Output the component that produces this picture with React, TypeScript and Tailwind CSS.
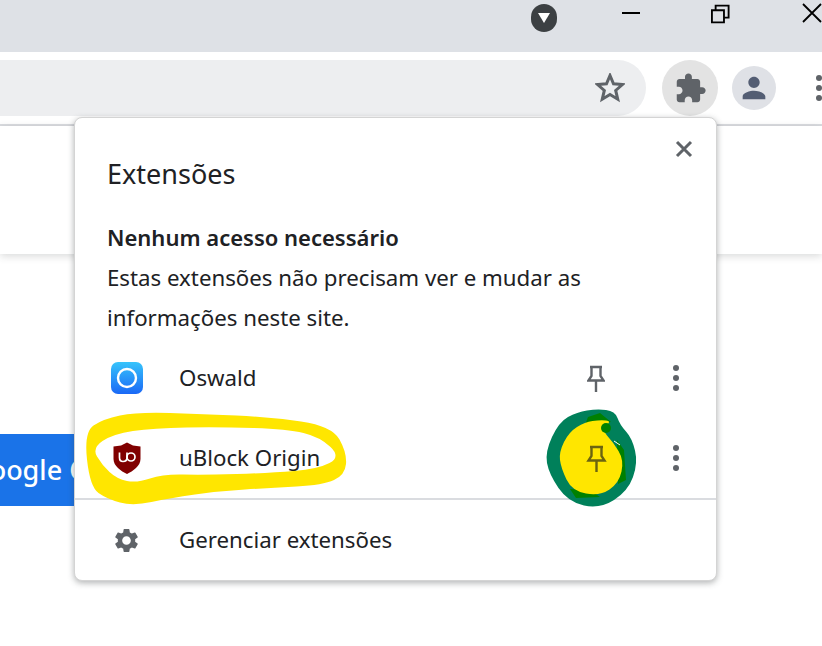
import { MdPerson, MdSettings } from "react-icons/md";

type Pt = [number, number];

// closed smooth outline through hand-traced marker points
const smooth = (pts: Pt[]) => {
  const mid = (a: Pt, b: Pt) => `${(a[0] + b[0]) / 2} ${(a[1] + b[1]) / 2}`;
  let d = `M${mid(pts[pts.length - 1], pts[0])}`;
  pts.forEach((p, i) => {
    d += `Q${p[0]} ${p[1]} ${mid(p, pts[(i + 1) % pts.length])}`;
  });
  return d + "Z";
};

const ringOuter: Pt[] = [
  [84, 432], [103, 419], [137, 412], [203, 414], [270, 417], [332, 426], [347, 453], [345, 475],
  [323, 485], [270, 488], [220, 491], [170, 498], [133, 506], [107, 499], [90, 487],
];
const ringInner: Pt[] = [
  [92, 448], [113, 434], [153, 428], [220, 427], [287, 429], [320, 437], [341, 457], [318, 469],
  [270, 473], [203, 475], [163, 474], [137, 483], [117, 479], [102, 465],
];
const greenBlob: Pt[] = [
  [597, 409], [615, 411], [620, 425], [632, 438], [638, 463], [628, 491], [600, 509], [568, 502],
  [549, 474], [545, 452], [559, 422], [577, 412],
];
const yellowBlob: Pt[] = [
  [600, 420], [612, 421], [601, 429], [613, 442], [624, 460], [619, 483], [600, 496], [572, 491],
  [561, 468], [559, 452], [569, 432], [585, 422],
];

const PinIcon = ({ color = "#5f6368" }: { color?: string }) => (
  <svg width="18" height="28" viewBox="0 0 18 28" fill="none" stroke={color} strokeWidth="2.4">
    <path d="M3 3h12M4.5 3v9L1.5 16.5h15L13.5 12V3M9 16.5V28" />
  </svg>
);

const Dots = () => (
  <div className="flex w-[6px] flex-col gap-1">
    <span className="h-[6px] w-[6px] rounded-full bg-[#5f6368]" />
    <span className="h-[6px] w-[6px] rounded-full bg-[#5f6368]" />
    <span className="h-[6px] w-[6px] rounded-full bg-[#5f6368]" />
  </div>
);

const OswaldLogo = () => (
  <svg width="32" height="32" viewBox="0 0 32 32">
    <defs>
      <linearGradient id="osw" x1="0" y1="0" x2="0" y2="1">
        <stop offset="0" stopColor="#37c4fb" />
        <stop offset="1" stopColor="#1a68f6" />
      </linearGradient>
    </defs>
    <rect width="32" height="32" rx="7" fill="url(#osw)" />
    <circle cx="16" cy="16" r="9" fill="none" stroke="#ffffff" strokeWidth="2.4" />
  </svg>
);

const UboLogo = () => (
  <svg className="ml-[2px]" width="28" height="32" viewBox="0 0 28 32">
    <path d="M14 0.5 20 3.5 27.5 4.5V17C27.5 24 20 29 14 32 8 29 0.5 24 0.5 17V4.5L8 3.5Z" fill="#800000" />
    <path d="M6.5 10.5V15.5Q6.5 19.5 10 19.5 14 19.5 14 15.5V10.5" fill="none" stroke="#ffffff" strokeWidth="1.7" />
    <circle cx="18" cy="15" r="4" fill="none" stroke="#ffffff" strokeWidth="1.7" />
  </svg>
);

const Row = ({ icon, label }: { icon: React.ReactNode; label: string }) => (
  <div className="flex h-[80px] items-center">
    <div className="flex w-[72px] pl-[4px]">{icon}</div>
    <span className="flex-1 text-[22.25px] text-[#202124]">{label}</span>
    <PinIcon />
    <div className="ml-[68px] mr-[5px]">
      <Dots />
    </div>
  </div>
);

export default function App() {
  return (
    <div className="relative h-[646px] w-[822px] overflow-hidden bg-white font-['Noto_Sans',sans-serif]">
      <header className="flex h-[52px] items-start bg-[#dee1e6] pl-[531px]">
        <div className="mt-1 flex h-7 w-7 items-center justify-center rounded-full bg-[#3c4043]">
          <svg width="14" height="12" viewBox="0 0 14 12">
            <path d="M1 1h12L7 11z" fill="#ffffff" />
          </svg>
        </div>
        <div className="ml-[65px] mt-[12px] h-[2px] w-[20px] bg-black" />
        <svg className="ml-[71px] mt-[3px]" width="20" height="21" viewBox="0 0 20 21" fill="none" stroke="#000" strokeWidth="2">
          <path d="M1 7h13v13H1zM5 7V2h14v13h-5" />
        </svg>
        <svg className="ml-[72px] mt-[3px] shrink-0" width="20" height="20" viewBox="0 0 20 20" stroke="#000" strokeWidth="1.8">
          <path d="M1 1l18 18M19 1 1 19" />
        </svg>
      </header>

      <div className="flex h-[74px] items-center border-b-2 border-[#dadce0]">
        <div className="flex h-14 w-[646px] items-center justify-end rounded-r-[28px] bg-[#edeef0] pr-[21px]">
          <svg width="30" height="30" viewBox="0 0 24 24" fill="none" stroke="#5f6368" strokeWidth="2.4">
            <path d="M22 9.24l-7.19-.62L12 2 9.19 8.63 2 9.24l5.46 4.73L5.82 21 12 17.27 18.18 21l-1.63-7.03L22 9.24z" />
          </svg>
        </div>
        <div className="ml-4 flex h-14 w-14 items-center justify-center rounded-full bg-[#e3e3e3]">
          <svg width="33" height="33" viewBox="0 0 24 24" fill="#5f6368">
            <path d="M20.5 11H19V7c0-1.1-.9-2-2-2h-4V3.5C13 2.12 11.88 1 10.5 1S8 2.12 8 3.5V5H4c-1.1 0-1.99.9-1.99 2v3.8H3.5c1.49 0 2.7 1.21 2.7 2.7s-1.21 2.7-2.7 2.7H2V20c0 1.1.9 2 2 2h3.8v-1.5c0-1.49 1.21-2.7 2.7-2.7 1.49 0 2.7 1.21 2.7 2.7V22H17c1.1 0 2-.9 2-2v-4h1.5c1.38 0 2.5-1.12 2.5-2.5S21.88 11 20.5 11z" />
          </svg>
        </div>
        <div className="ml-[14px] flex h-11 w-11 items-center justify-center rounded-full bg-[#dfe1e6]">
          <MdPerson size={34} color="#535d73" />
        </div>
        <div className="ml-[40px] shrink-0">
          <Dots />
        </div>
      </div>

      <div className="h-[128px] shadow-[0_2px_8px_rgba(60,64,67,0.2)]" />

      <div className="mt-[180px] flex h-[72px] w-[140px] items-center overflow-hidden rounded-r bg-[#1a73e8]">
        <span className="-ml-[30px] whitespace-nowrap text-[27px] font-medium text-white">Google Chrome</span>
      </div>

      <section className="absolute left-[74px] top-[117px] h-[464px] w-[643px] rounded-lg border border-[#d4d4d4] bg-white pl-[32px] shadow-[0_2px_6px_rgba(60,64,67,0.4)]">
        <svg className="absolute right-[23px] top-[22px]" width="18" height="18" viewBox="0 0 18 18" stroke="#5f6368" strokeWidth="3">
          <path d="M2 2l14 14M16 2 2 16" />
        </svg>
        <h1 className="pt-[37px] text-[27px] leading-[38px] text-[#202124]">Extensões</h1>
        <p className="mt-[24px] text-[22px] leading-[40px] font-semibold text-[#202124]">Nenhum acesso necessário</p>
        <p className="mt-[1px] text-[22.25px] leading-[40px] text-[#202124]">
          Estas extensões não precisam ver e mudar as
          <br />
          informações neste site.
        </p>
        <div className="pr-[32px]">
          <Row icon={<OswaldLogo />} label="Oswald" />
          <Row icon={<UboLogo />} label="uBlock Origin" />
        </div>
        <div className="-ml-[32px] border-t-2 border-[#dadce0]">
          <div className="flex h-[80px] items-center pl-[32px]">
            <div className="flex w-[72px] pl-[5px]">
              <MdSettings size={29} color="#5f6368" />
            </div>
            <span className="text-[22.25px] text-[#202124]">Gerenciar extensões</span>
          </div>
        </div>
      </section>

      {/* marker scribbles drawn over the screenshot */}
      <svg className="pointer-events-none absolute left-0 top-0" width="822" height="646" viewBox="0 0 822 646" fill="none">
        <path d={smooth(ringOuter) + smooth(ringInner)} fill="#ffe600" fillRule="evenodd" />
        <path d={smooth(greenBlob)} fill="#00805a" />
        <path d="M588 417 600 413 611 422 585 425ZM617 440 624 450 626 480 618 484ZM570 489 576 498 600 497 590 490Z" fill="#008000" />
        <path d={smooth(yellowBlob)} fill="#ffe600" />
        <circle cx="606" cy="428" r="5" fill="#008000" />
        <path d="M614 441 620 445" stroke="#ffffff" strokeWidth="1" />
        <path d="M590 447h13M591.500 447v9l-3 4.500h16l-3-4.500v-9M596.500 460.500V472" stroke="#6b6410" strokeWidth="2.4" />
      </svg>
    </div>
  );
}
